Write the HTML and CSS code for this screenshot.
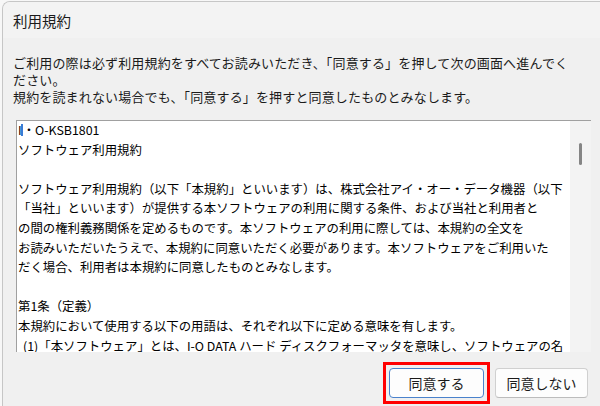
FILE: index.html
```html
<!DOCTYPE html>
<html lang="ja">
<head>
<meta charset="utf-8">
<title>利用規約</title>
<link rel="stylesheet" href="styles.css">
</head>
<body>
<div class="window">
  <div class="titlebar">利用規約</div>
  <div class="content">
    <div class="intro">
      <div class="line">ご利用の際は必ず利用規約をすべてお読みいただき、「同意する」を押して次の画面へ進んでく</div>
      <div class="line">ださい。</div>
      <div class="line">規約を読まれない場合でも、「同意する」を押すと同意したものとみなします。</div>
    </div>
    <div class="textbox">
      <div class="text">
        <div class="tl">I<span class="caret"></span>・O-KSB1801</div>
        <div class="tl">ソフトウェア利用規約</div>
        <div class="tl">&nbsp;</div>
        <div class="tl">ソフトウェア利用規約（以下「本規約」といいます）は、株式会社アイ・オー・データ機器（以下</div>
        <div class="tl">「当社」といいます）が提供する本ソフトウェアの利用に関する条件、および当社と利用者と</div>
        <div class="tl">の間の権利義務関係を定めるものです。本ソフトウェアの利用に際しては、本規約の全文を</div>
        <div class="tl">お読みいただいたうえで、本規約に同意いただく必要があります。本ソフトウェアをご利用いた</div>
        <div class="tl">だく場合、利用者は本規約に同意したものとみなします。</div>
        <div class="tl">&nbsp;</div>
        <div class="tl">第1条（定義）</div>
        <div class="tl">本規約において使用する以下の用語は、それぞれ以下に定める意味を有します。</div>
        <div class="tl indent">(1)「本ソフトウェア」とは、I-O DATA ハード ディスクフォーマッタを意味し、ソフトウェアの名</div>
      </div>
      <div class="scrollbar"><div class="thumb"></div></div>
    </div>
    <div class="buttons">
      <span class="highlight"><button class="btn primary">同意する</button></span>
      <button class="btn">同意しない</button>
    </div>
  </div>
</div>
</body>
</html>
```
FILE: styles.css
```css
html, body {
  margin: 0;
  padding: 0;
  background: #f7f7f7;
  width: 600px;
  height: 406px;
  overflow: hidden;
}
body {
  padding: 1px 0 0 2px;
  box-sizing: border-box;
  font-family: "Noto Sans CJK JP", "Noto Sans", sans-serif;
  color: #1b1b1b;
}
.window {
  width: 598px;
  height: 406px;
  box-sizing: border-box;
  border-left: 1px solid #c6c6c6;
  border-top: 1px solid #c6c6c6;
  border-top-left-radius: 8px;
  background: #f0f0f0;
  overflow: hidden;
}
.titlebar {
  height: 36px;
  display: flex;
  align-items: center;
  padding-left: 10px;
  font-size: 14.5px;
  background: #f3f3f3;
  color: #1a1a1a;
}
.content {
  padding: 16px 9px 0 10px;
}
.intro {
  font-size: 13px;
  line-height: 17px;
  letter-spacing: 0.15px;
  white-space: nowrap;
}
.textbox {
  margin: 15px 0 0 3px;
  height: 232px;
  display: flex;
  border-top: 1px solid #a0a0a0;
  border-left: 1px solid #a0a0a0;
  box-sizing: border-box;
}
.text {
  flex: 1;
  background: #ffffff;
  overflow: hidden;
  padding-left: 1px;
  font-size: 12.4px;
  line-height: 19.6px;
  color: #000;
  white-space: nowrap;
}
.tl.indent {
  padding-left: 5px;
}
.caret {
  display: inline-block;
  width: 2px;
  height: 12px;
  background: #3a7bd5;
  margin-left: -1px;
  vertical-align: -1px;
}
.scrollbar {
  width: 21px;
  background: #f3f3f3;
  display: flex;
  justify-content: center;
  padding-top: 22px;
  box-sizing: border-box;
}
.thumb {
  width: 3px;
  height: 22px;
  border-radius: 2px;
  background: #858585;
}
.buttons {
  display: flex;
  justify-content: flex-end;
  align-items: center;
  gap: 5px;
  margin: 10px 3px 0 0;
}
.highlight {
  display: flex;
  border: 3px solid #ff0000;
  padding: 3px;
}
.btn {
  height: 30px;
  box-sizing: border-box;
  font-family: "Noto Sans CJK JP", "Noto Sans", sans-serif;
  font-size: 14px;
  color: #1a1a1a;
  background: #fdfdfd;
  border: 1px solid #d0d0d0;
  border-bottom-color: #bcbcbc;
  border-radius: 4px;
  padding: 0;
  width: 93px;
}
.btn.primary {
  width: 95px;
  border-color: #4a82cc;
}
```
